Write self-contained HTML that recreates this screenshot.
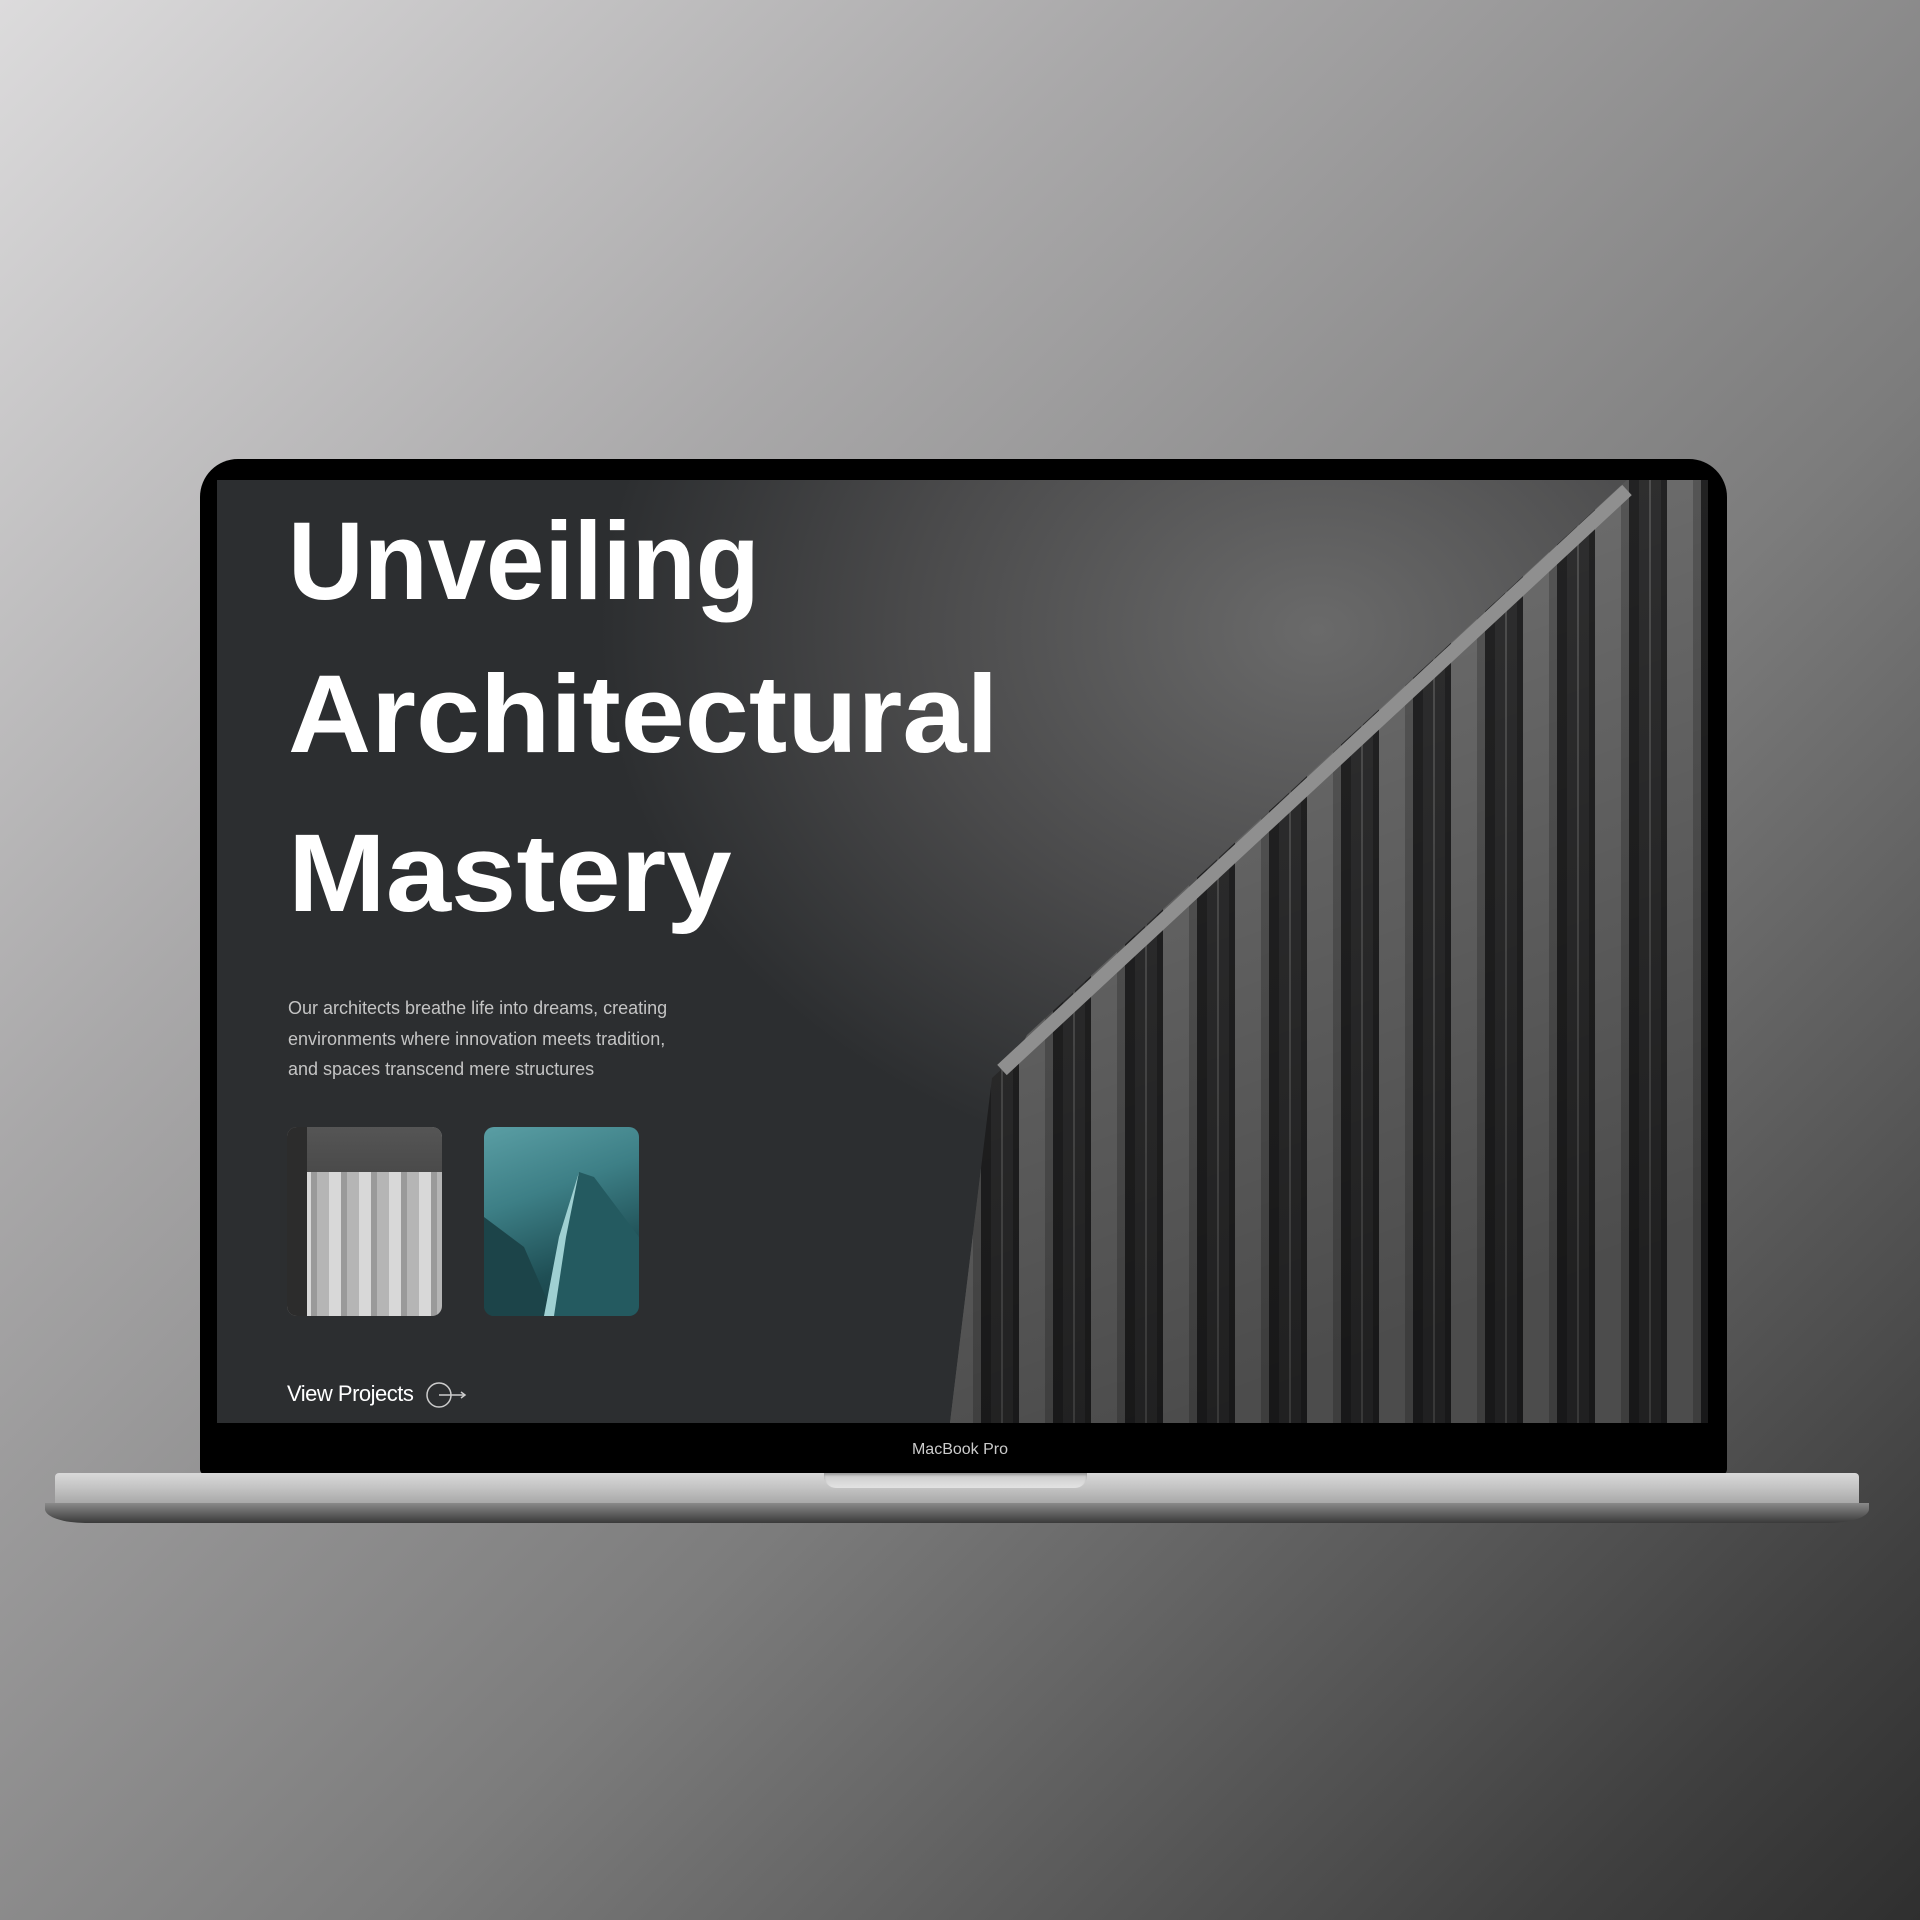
<!DOCTYPE html>
<html><head><meta charset="utf-8"><style>
html,body{margin:0;padding:0}
body{width:1920px;height:1920px;position:relative;overflow:hidden;font-family:"Liberation Sans",sans-serif;
background:linear-gradient(135deg,#dcdbdc 0%,#a9a8a9 30%,#7c7c7c 60%,#404040 90%,#2f2f2f 100%);}
.lid{position:absolute;left:200px;top:459px;width:1527px;height:1016px;background:#000;border-radius:38px 38px 6px 6px;}
.screen{position:absolute;left:217px;top:480px;width:1491px;height:943px;overflow:hidden;
background:radial-gradient(ellipse 900px 700px at 1100px 150px,#6a6a6a 0%,#4a4a4b 45%,#2c2e30 80%),#2a2c2e;}
.h{position:absolute;left:71px;color:#fff;font-weight:bold;font-size:110px;line-height:1;transform-origin:left;white-space:nowrap}
.p{position:absolute;left:71px;top:513px;color:#c4c4c4;font-size:18px;line-height:30.5px;}
.t{position:absolute;top:647px;width:155px;height:189px;border-radius:10px;overflow:hidden}
.vp{position:absolute;left:70px;top:900px;color:#fff;font-size:22px;letter-spacing:-0.5px}
.mb{position:absolute;left:0;width:1920px;top:1441px;text-align:center;color:#ccc;font-size:16px}
.base{position:absolute;left:55px;top:1473px;width:1804px;height:30px;background:linear-gradient(#d9d9d9,#c3c3c3 50%,#a9a9a9);border-radius:4px 4px 0 0}
.base2{position:absolute;left:45px;top:1503px;width:1824px;height:20px;background:linear-gradient(#8a8a8a,#3a3a3a);border-radius:0 0 40px 40px/0 0 14px 14px}
.notch{position:absolute;left:824px;top:1473px;width:263px;height:15px;background:linear-gradient(#c9c9c9,#e3e3e3);border-radius:0 0 12px 12px;box-shadow:inset 0 2px 2px #999}
</style></head><body>
<div class="lid"></div>
<div class="screen">
<svg width="1491" height="943" style="position:absolute;left:0;top:0">
<defs>
<pattern id="st" width="72" height="943" patternUnits="userSpaceOnUse" x="10">
<rect width="72" height="943" fill="#2c2c2d"/>
<rect x="0" width="34" height="943" fill="#8a8a8a"/>
<rect x="26" width="8" height="943" fill="#6e6e6e"/>
<rect x="44" width="22" height="943" fill="#3b3b3c"/>
<rect x="54" width="2" height="943" fill="#666"/>
</pattern>
<linearGradient id="sh" x1="0" y1="0" x2="0.3" y2="1">
<stop offset="0" stop-color="#000" stop-opacity="0.15"/>
<stop offset="1" stop-color="#000" stop-opacity="0.45"/>
</linearGradient>
</defs>
<polygon points="1410,0 1491,0 1491,943 733,943 775,598 800,575 810,555" fill="url(#st)"/>
<polygon points="1410,0 1491,0 1491,943 733,943 775,598 800,575 810,555" fill="url(#sh)"/>
<polyline points="785,590 1410,10" stroke="#8f8f8f" stroke-width="14" fill="none"/>
</svg>
<div class="h" style="top:27px;transform:scaleX(0.953)">Unveiling</div>
<div class="h" style="top:180px;transform:scaleX(1.047)">Architectural</div>
<div class="h" style="top:339px;transform:scaleX(1.067)">Mastery</div>
<div class="p">Our architects breathe life into dreams, creating<br>environments where innovation meets tradition,<br>and spaces transcend mere structures</div>
<div class="t" style="left:70px;background:repeating-linear-gradient(90deg,#b5b5b5 0 12px,#d8d8d8 12px 24px,#9a9a9a 24px 30px),#aaa">
<div style="position:absolute;left:0;top:0;width:155px;height:45px;background:linear-gradient(#555,#4a4a4a)"></div>
<div style="position:absolute;left:0;top:0;width:20px;height:189px;background:#2c2c2c"></div></div>
<div class="t" style="left:267px;background:linear-gradient(160deg,#5a9ea4 0%,#3d7f86 35%,#1f4f55 70%,#163b40 100%)">
<svg width="155" height="189" style="position:absolute;left:0;top:0"><polygon points="0,90 40,120 70,189 0,189" fill="#1c4449"/><polygon points="95,45 110,50 155,110 155,189 60,189 75,110" fill="#245a60"/><polygon points="95,45 75,110 60,189 70,189 82,110" fill="#9fd0d2"/></svg></div>
<div class="vp">View Projects <svg width="44" height="30" style="vertical-align:middle;margin-left:6px"><circle cx="14" cy="15" r="12" fill="none" stroke="#ccc" stroke-width="1.5"/><line x1="14" y1="15" x2="40" y2="15" stroke="#ccc" stroke-width="1.5"/><polyline points="36,12 40,15 36,18" fill="none" stroke="#ccc" stroke-width="1.5"/></svg></div>
</div>
<div class="mb">MacBook Pro</div>
<div class="base"></div>
<div class="base2"></div>
<div class="notch"></div>
</body></html>
